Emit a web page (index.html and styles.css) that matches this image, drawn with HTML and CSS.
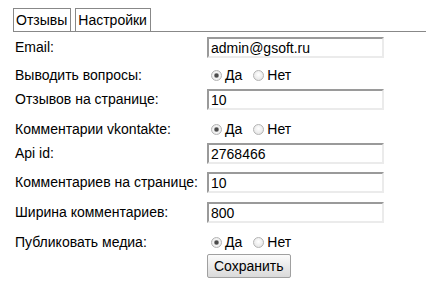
FILE: index.html
```html
<!DOCTYPE html>
<html lang="ru">
<head>
  <meta charset="UTF-8">
  <title>Настройки</title>
  <link rel="stylesheet" href="styles.css">
</head>
<body>
  <div class="wrap">
    <ul class="tabs">
      <li class="tab">Отзывы</li>
      <li class="tab">Настройки</li>
    </ul>
    <form class="settings">
      <label class="name">Email:</label>
      <div class="value"><input type="text" class="field" value="admin@gsoft.ru"></div>

      <label class="name">Выводить вопросы:</label>
      <div class="value">
        <label class="opt"><input type="radio" name="q" checked> Да</label>
        <label class="opt"><input type="radio" name="q"> Нет</label>
      </div>

      <label class="name">Отзывов на странице:</label>
      <div class="value"><input type="text" class="field" value="10"></div>

      <label class="name">Комментарии vkontakte:</label>
      <div class="value">
        <label class="opt"><input type="radio" name="vk" checked> Да</label>
        <label class="opt"><input type="radio" name="vk"> Нет</label>
      </div>

      <label class="name">Api id:</label>
      <div class="value"><input type="text" class="field" value="2768466"></div>

      <label class="name">Комментариев на странице:</label>
      <div class="value"><input type="text" class="field" value="10"></div>

      <label class="name">Ширина комментариев:</label>
      <div class="value"><input type="text" class="field" value="800"></div>

      <label class="name">Публиковать медиа:</label>
      <div class="value">
        <label class="opt"><input type="radio" name="m" checked> Да</label>
        <label class="opt"><input type="radio" name="m"> Нет</label>
      </div>

      <span></span>
      <div class="value"><button type="button" class="save">Сохранить</button></div>
    </form>
  </div>
</body>
</html>
```

FILE: styles.css
```css
body {
  margin: 0;
  background: #fff;
  font-family: "Liberation Sans", Arial, sans-serif;
  font-size: 14px;
  color: #000;
}

.wrap {
  padding: 8px 1px 0 13px;
}

.tabs {
  display: flex;
  gap: 4px;
  margin: 0;
  padding: 0;
  list-style: none;
  border-bottom: 1px solid #888;
}

.tab {
  padding: 3px 3px 3px 2px;
  border: 1px solid #888;
  border-bottom: 0;
  line-height: 16px;
}

/* строки формы: поле ввода чуть выше, чем переключатели */
.settings {
  display: grid;
  grid-template-columns: 192px 1fr;
  grid-template-rows: 28px 24px 30px 24px 29px 30px 30px 22px auto;
  margin-top: 5px;
}

.name {
  display: flex;
  align-items: flex-start;
  padding: 2px 0 0 2px;
}

.value {
  display: flex;
  align-items: flex-start;
  padding-left: 2px;
}

.field {
  box-sizing: border-box;
  width: 177px;
  height: 21px;
  margin: 0;
  padding: 0 2px;
  border: 2px solid;
  border-color: #9a9a9a #ebebeb #ebebeb #9a9a9a;
  font: 14px "Liberation Sans", Arial, sans-serif;
  color: #000;
}

.opt {
  display: inline-flex;
  align-items: center;
  margin: 2px 7px 0 4px;
}

.opt input {
  appearance: none;
  width: 11px;
  height: 11px;
  margin: 0 3px 0 0;
  border-radius: 50%;
  border: 1px solid #b4b4b4;
  background: radial-gradient(circle at 50% 40%, #fff 0, #e8e8e8 70%, #d4d4d4 100%);
}

.opt input:checked {
  background: radial-gradient(circle, #4a4a4a 0, #4a4a4a 1.5px, #aaa 2.3px, #f4f4f4 3px, #e0e0e0 100%);
}

.save {
  height: 24px;
  margin: 0;
  padding: 0 6px;
  border: 1px solid #a0a0a0;
  border-radius: 2px;
  background: linear-gradient(#fbfbfb, #dadada);
  font: 14px "Liberation Sans", Arial, sans-serif;
  color: #000;
}
```
